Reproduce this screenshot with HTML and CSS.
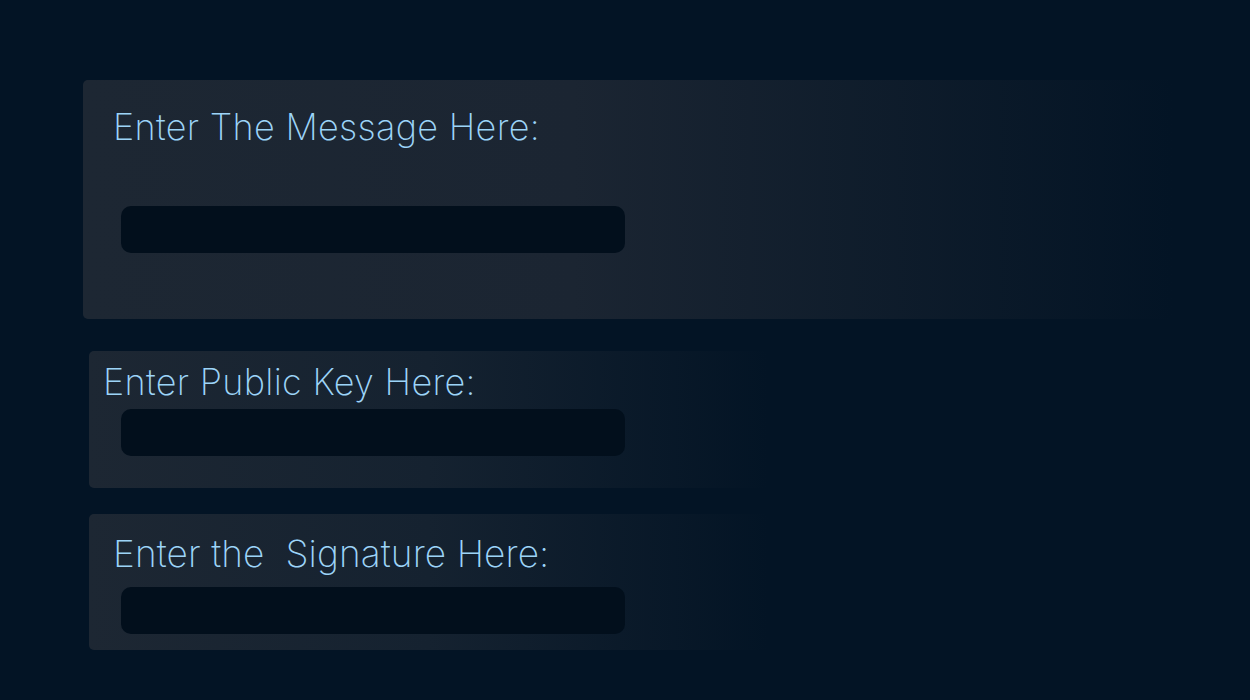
FILE: index.html
```html
<!DOCTYPE html>
<html>
<head>
<meta charset="utf-8">
<link rel="stylesheet" href="styles.css">
</head>
<body>
<main class="page">
  <section class="card card-message">
    <label class="label label-message">Enter The Message Here:</label>
    <div class="input input-message"></div>
  </section>
  <section class="card card-key">
    <label class="label label-key">Enter Public Key Here:</label>
    <div class="input input-key"></div>
  </section>
  <section class="card card-sig">
    <label class="label label-sig">Enter the&nbsp; Signature Here:</label>
    <div class="input input-sig"></div>
  </section>
</main>
</body>
</html>
```
FILE: styles.css
```css
html, body {
  margin: 0;
  padding: 0;
  background: #031425;
  height: 100%;
}
body {
  font-family: "Inter", "Noto Sans", sans-serif;
  overflow: hidden;
}
.page {
  display: flex;
  flex-direction: column;
  align-items: flex-start;
  padding: 80px 0 0 83px;
}
.card {
  display: flex;
  flex-direction: column;
  border-radius: 5px;
  box-sizing: border-box;
}
.label {
  display: block;
  color: #9dd4f8;
  font-weight: 200;
  font-size: 36px;
  line-height: 42px;
  letter-spacing: 0.3px;
  white-space: pre;
}
.input {
  width: 504px;
  height: 47px;
  border-radius: 10px;
  background: #020f1c;
}
.card-message {
  width: 1090px;
  height: 239px;
  padding: 0 0 0 30px;
  background: linear-gradient(to right, #1d2733 0%, #1b2532 45%, rgba(3,20,37,0) 100%);
}
.label-message {
  margin-top: 26px;
}
.input-message {
  margin-top: 58px;
  margin-left: 8px;
}
.card-key {
  margin-top: 32px;
  margin-left: 6px;
  width: 680px;
  height: 137px;
  padding-left: 14px;
  background: linear-gradient(to right, #1d2733 0%, #152230 50%, rgba(3,20,37,0) 100%);
}
.label-key {
  margin-top: 10px;
}
.input-key {
  margin-top: 6px;
  margin-left: 18px;
}
.card-sig {
  margin-top: 26px;
  margin-left: 6px;
  width: 680px;
  height: 136px;
  padding-left: 24px;
  background: linear-gradient(to right, #1d2733 0%, #152230 50%, rgba(3,20,37,0) 100%);
}
.label-sig {
  margin-top: 19px;
  font-size: 37px;
  letter-spacing: 0.1px;
}
.input-sig {
  margin-top: 12px;
  margin-left: 8px;
}
```
